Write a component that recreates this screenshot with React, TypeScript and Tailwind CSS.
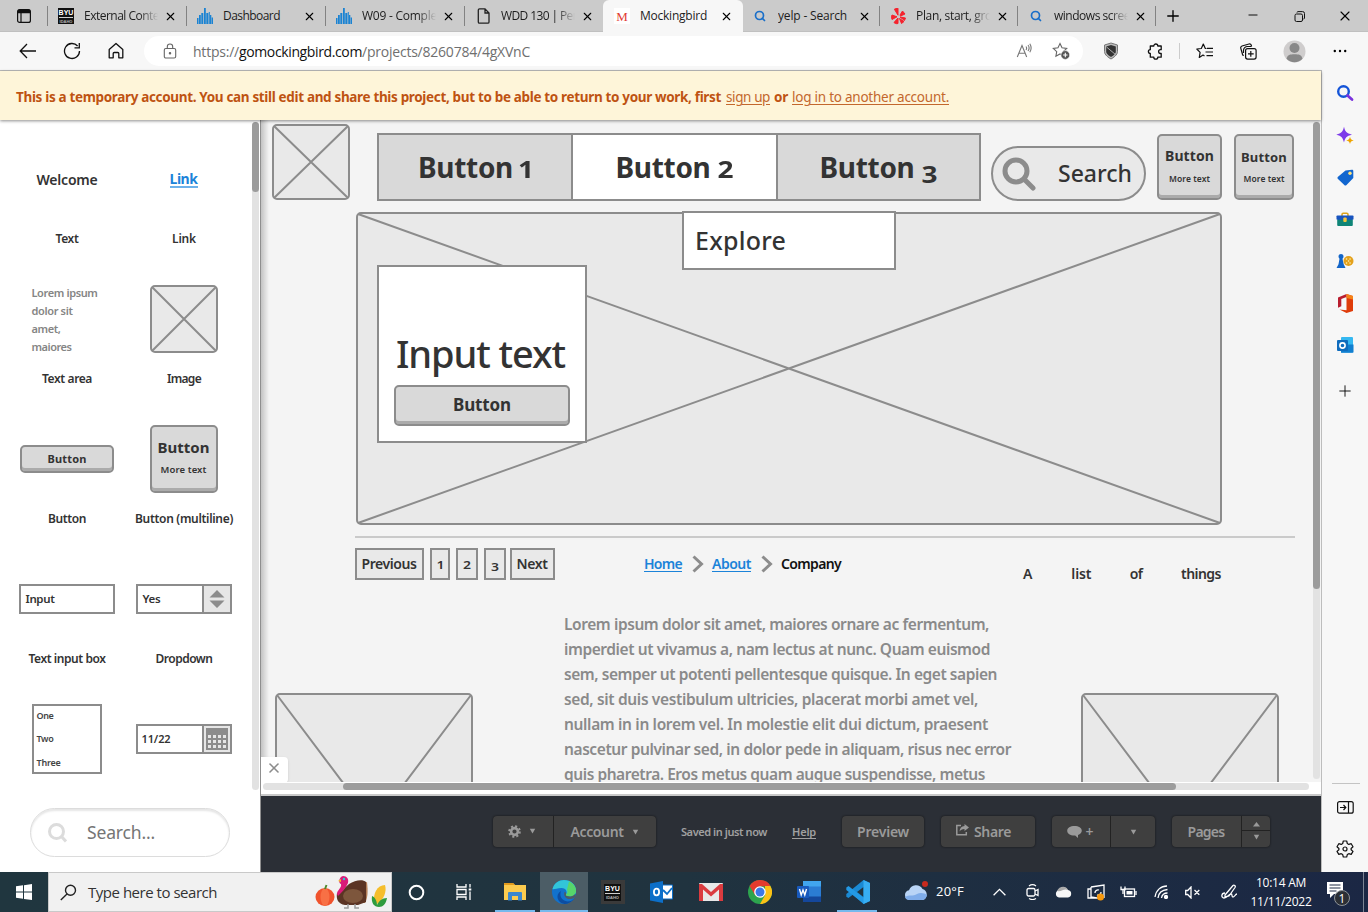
import React, { useLayoutEffect, useRef } from "react";
import { ArrowLeft, Plus, X, Minus, Search } from "lucide-react";

/* Single-line text that is tracked so that it fills a given width. */
function Fit({ w, className = "", children }: { w: number; className?: string; children: string }) {
  const ref = useRef<HTMLSpanElement>(null);
  useLayoutEffect(() => {
    const el = ref.current;
    if (!el) return;
    el.style.letterSpacing = "0px";
    const natural = el.getBoundingClientRect().width;
    el.style.letterSpacing = `${(w - natural) / children.length}px`;
  }, [w, children]);
  return (
    <span ref={ref} className={`inline-block shrink-0 whitespace-pre ${className}`}>
      {children}
    </span>
  );
}

const UI = "font-['Open_Sans','Noto_Sans',sans-serif]";

function Placeholder({ className = "", w, h }: { className?: string; w: number; h: number }) {
  return (
    <svg className={`block shrink-0 ${className}`} width={w} height={h} viewBox={`0 0 ${w} ${h}`} fill="none" stroke="#8c8c8c" strokeWidth="2">
      <rect x="1" y="1" width={w - 2} height={h - 2} rx="4" fill="#e9e9e9" />
      <path d={`M2 2L${w - 2} ${h - 2}M${w - 2} 2L2 ${h - 2}`} />
    </svg>
  );
}

/* ---------- browser chrome ---------- */

function BarsIcon() {
  return (
    <svg width="16" height="16" viewBox="0 0 16 16" fill="#1b83d2">
      <path d="M0 10h1.500v6H0zM2 7h1.800v9H2zM4.300 5h2v11h-2zM7 0h1.800v16H7zM9.300 5h2v11h-2zM11.800 4h1v12h-1zM13 7h1.300v9H13zM14.700 9.500H16V16h-1.300z" />
    </svg>
  );
}
function YelpIcon() {
  return (
    <svg width="15" height="17" viewBox="0 0 15 17" fill="#f5222d">
      <path d="M3.500 1L7 .2v7L3.500 1.500zM9 7l2.500-4L14 6 9.500 8zM1 7l5 1.800L1 11.500C.3 10 .4 8.500 1 7zM7 10v5.500C5.500 16 4 15.500 3 14.500zM8.500 10.500l4.500 3-2.500 2zM9 9l5.500 1-1 2.500z" stroke="#f5222d" />
    </svg>
  );
}
function Byu({ big = false }: { big?: boolean }) {
  return (
    <span className={`flex flex-col items-center justify-center bg-[#111] font-['Liberation_Sans',sans-serif] font-bold leading-none text-white ${big ? "size-[17px]" : "h-4 w-4"}`}>
      <span className="border-b border-white/80 text-[7px] leading-[8px]">BYU</span>
      <span className="mt-px text-[4px] leading-[5px] text-white/70">IDAHO</span>
    </span>
  );
}

type TabT = { icon: React.ReactNode; title: string; w: number; wide: number; active?: boolean; sep?: boolean; fade?: boolean };
const blueSearch = <Search size={12} strokeWidth={3.4} color="#1a6fc9" />;
const tabs: TabT[] = [
  { icon: <Byu />, title: "External Conte", w: 75, wide: 139, sep: true, fade: true },
  { icon: <BarsIcon />, title: "Dashboard", w: 57, wide: 139, sep: true },
  { icon: <BarsIcon />, title: "W09 - Comple", w: 75, wide: 139, sep: true, fade: true },
  {
    icon: (
      <svg width="13" height="16" viewBox="0 0 13 16" fill="none" stroke="#222" strokeWidth="1.300">
        <path d="M2.500.8h5.500l4 4.200v9a1.200 1.200 0 01-1.200 1.200H2.500A1.200 1.200 0 011.300 14V2A1.200 1.200 0 012.500.8zM8 1v4h4" />
      </svg>
    ),
    title: "WDD 130 | Per",
    w: 76,
    wide: 138,
    fade: true,
  },
  {
    icon: <span className="flex size-4 items-center justify-center bg-white font-['Liberation_Serif',serif] text-[13px] leading-none text-[#e23b33]">M</span>,
    title: "Mockingbird",
    w: 67,
    wide: 140,
    active: true,
  },
  { icon: blueSearch, title: "yelp - Search", w: 69, wide: 137, sep: true },
  { icon: <YelpIcon />, title: "Plan, start, gro", w: 76, wide: 138, sep: true, fade: true },
  { icon: blueSearch, title: "windows scree", w: 76, wide: 138, sep: true, fade: true },
];

function Tab({ t }: { t: TabT }) {
  const { wide } = t;
  return (
    <div
      className={`relative flex h-8 shrink-0 items-center ${wide === 139 ? "w-[139px] pl-[10px]" : wide === 140 ? "w-[140px] pl-[11px]" : wide === 137 ? "w-[137px] pl-[9px]" : "w-[138px] pl-[10px]"} ${t.active ? "rounded-t-md bg-[#f7f7f7]" : ""}`}
    >
      <span className="flex w-4 items-center justify-center">{t.icon}</span>
      <span
        className={`ml-[10px] flex w-[74px] items-center overflow-hidden text-[12px] text-[#1d1d1d] ${t.fade ? "[mask-image:linear-gradient(to_right,black_75%,transparent)]" : ""}`}
      >
        <Fit w={t.w}>{t.title}</Fit>
      </span>
      <X size={13} strokeWidth={2} className="ml-[6px] text-black" />
      {t.sep && <i className="absolute top-[6px] right-0 h-5 w-px bg-[#828282]" />}
    </div>
  );
}

function TabStrip() {
  return (
    <div className="flex h-8 items-center bg-[#cbcbcb] shadow-[inset_0_-1px_0_#c0c0c0]">
      <div className="relative flex h-8 w-[48px] shrink-0 items-center pl-4">
        <svg width="16" height="16" viewBox="0 0 16 16" fill="none" stroke="#111" strokeWidth="1.200">
          <rect x="1.600" y="1.600" width="12.800" height="12.800" rx="2" />
          <path d="M2 3.500h12" strokeWidth="3.500" />
          <path d="M5 4v10" />
        </svg>
        <i className="absolute top-[6px] right-0 h-5 w-px bg-[#828282]" />
      </div>
      {tabs.map((t) => (
        <Tab key={t.title} t={t} />
      ))}
      <Plus size={18} strokeWidth={1.8} className="ml-[8px]" />
      <div className="ml-auto flex">
        <span className="flex w-[46px] justify-center"><Minus size={14} strokeWidth={1.6} /></span>
        <span className="flex w-[46px] items-center justify-center">
          <svg width="11" height="11" viewBox="0 0 11 11" fill="none" stroke="#111">
            <rect x="1" y="3" width="7.500" height="7.500" rx="1.500" />
            <path d="M3 1.500C3 .9 3.500.6 4 .6h4.500A1.900 1.900 0 0110.500 2.500V7c0 .6-.4 1-1 1" />
          </svg>
        </span>
        <span className="flex w-[46px] justify-center"><X size={16} strokeWidth={1.7} /></span>
      </div>
    </div>
  );
}

const starPath = "M8 1.500l2 4.300 4.700.6-3.400 3.200.8 4.700L8 12l-4.100 2.300.8-4.700L1.300 6.400 6 5.800z";

function Toolbar() {
  return (
    <div className="flex h-[38px] items-center bg-[#f7f7f7] text-[#111]">
      <div className="flex w-[144px] items-center pl-[6px]">
        <span className="flex w-11 justify-center">
          <svg width="18" height="16" viewBox="0 0 18 16" fill="none" stroke="#111" strokeWidth="1.300">
            <path d="M17 8H1.500M8 1L1.200 8 8 15" />
          </svg>
        </span>
        <span className="flex w-11 justify-center">
          <svg width="18" height="18" viewBox="0 0 18 18" fill="none" stroke="#111" strokeWidth="1.300">
            <path d="M16.500 9A7.500 7.500 0 1114.600 4M16.300 1v4.800h-4.800" />
          </svg>
        </span>
        <span className="flex w-11 justify-center">
          <svg width="16" height="18" viewBox="0 0 16 18" fill="none" stroke="#111" strokeWidth="1.300">
            <path d="M1.200 7.500L8 1.500l6.800 6v8.300h-4V11.500a1 1 0 00-1-1H6.200a1 1 0 00-1 1v4.300h-4z" strokeLinejoin="round" />
          </svg>
        </span>
      </div>
      <div className="flex h-[30px] w-[939px] items-center rounded-full bg-white pl-[18px]">
        <svg width="16" height="17" viewBox="0 0 16 17" fill="none" stroke="#666" strokeWidth="1.100">
          <rect x="2.300" y="5.500" width="11.400" height="9.500" rx="1.500" />
          <path d="M5.300 5.500V3.700a2.700 2.700 0 015.400 0v1.800" />
          <circle cx="8" cy="10.200" r=".7" fill="#555" />
        </svg>
        <span className="ml-[15px] flex text-[14px] text-[#6f6f6f]">
          <Fit w={46}>https://</Fit>
          <Fit w={123} className="text-[#111]">gomockingbird.com</Fit>
          <Fit w={168}>/projects/8260784/4gXVnC</Fit>
        </span>
        <svg className="ml-auto" width="17" height="16" viewBox="0 0 17 16" fill="none" stroke="#777" strokeWidth="1.100">
          <path d="M1.300 14L6 2.500 10.700 14M2.800 10.200h6.400M10 3.500a3 3 0 010 3.500M12 2a5 5 0 010 6M13.800.8a8 8 0 010 8.500" />
        </svg>
        <svg className="mr-[13px] ml-[19px]" width="18" height="18" viewBox="0 0 18 18" fill="none" stroke="#666" strokeWidth="1.100">
          <path d={starPath} />
          <circle cx="13.300" cy="13" r="4.400" fill="#555" stroke="#fff" strokeWidth=".6" />
          <path d="M13.300 10.800v4.400M11.100 13h4.400" stroke="#fff" />
        </svg>
      </div>
      <div className="flex items-center pl-[6px]">
        <span className="flex w-11 justify-center">
          <svg width="16" height="18" viewBox="0 0 16 18">
            <path d="M8 1l6.500 2v6.500c0 3.500-4 6-6.500 7.500C5.500 15.500 1.500 13 1.500 9.500V3z" fill="#bbb" stroke="#777" />
            <path d="M8 3l4.800 1.500v5c0 2.500-3 4.500-4.800 5.500-1.800-1-4.800-3-4.800-5.500v-5z" fill="#333" />
            <path d="M3.500 5l9 7.500" stroke="#aaa" />
          </svg>
        </span>
        <span className="flex w-11 justify-center">
          <svg width="16" height="17" viewBox="0 0 16 17" fill="none" stroke="#111" strokeWidth="1.300" strokeLinejoin="round">
            <path d="M3.300 3h3.500a2 2 0 014 0h3.400v3.700h-.7a1.900 1.900 0 000 3.800h.7v3.700h-3.400a2 2 0 01-4 0H3.300v-3.700a1.900 1.900 0 010-3.800z" />
          </svg>
        </span>
        <i className="ml-[2px] h-4 w-px bg-[#ccc]" />
        <span className="ml-[2px] flex w-11 justify-center">
          <svg width="17" height="16" viewBox="0 0 17 16" fill="none" stroke="#111" strokeWidth="1.200">
            <path d="M10.500 5.500L9.300 5.500 7.300 1 5.300 5.500.8 6l3.300 3.300-.8 5.200 3.700-2.400 1.500.9M11 5.300h6M9.500 9h7.500M10.500 12.700H17" strokeLinejoin="round" />
          </svg>
        </span>
        <span className="flex w-11 justify-center">
          <svg width="17" height="17" viewBox="0 0 17 17" fill="none" stroke="#111" strokeWidth="1.200">
            <rect x="5.600" y="5.600" width="10.500" height="10.500" rx="2" />
            <path d="M10.800 8v5.700M8 10.800h5.700M3.800 12.500L2.700 12 .8 5.400A2 2 0 012 3l7-2a2 2 0 012.300 1.300l.3 1.200M3.500 10V7.500a4 4 0 014-4h4" />
          </svg>
        </span>
        <span className="flex w-[48px] justify-center">
          <svg width="23" height="23" viewBox="0 0 23 23">
            <circle cx="11.500" cy="11.500" r="11" fill="#cfcdcd" />
            <circle cx="11.500" cy="8" r="5" fill="#888" />
            <path d="M3.500 18.800c1-4 3.500-4.500 8-4.500s7 .5 8 4.500a11 11 0 01-16 0z" fill="#888" />
          </svg>
        </span>
        <span className="flex w-11 justify-center">
          <svg width="14" height="4" viewBox="0 0 14 4">
            <circle cx="1.800" cy="2" r="1.200" /><circle cx="7" cy="2" r="1.200" /><circle cx="12.200" cy="2" r="1.200" />
          </svg>
        </span>
      </div>
    </div>
  );
}

function Sidebar() {
  const cell = "flex h-[42px] items-center justify-center";
  return (
    <div className="flex w-[47px] shrink-0 flex-col border-l border-[#bdbdbd] bg-[#f7f7f7] pt-[2px]">
      <div className={cell}>
        <svg width="18" height="18" viewBox="0 0 18 18" fill="none">
          <circle cx="7.500" cy="7.500" r="5.300" stroke="#1454d8" strokeWidth="2.400" />
          <path d="M11.500 11.500l4.500 4" stroke="#7a32dd" strokeWidth="2.800" strokeLinecap="round" />
        </svg>
      </div>
      <div className={cell}>
        <svg width="18" height="18" viewBox="0 0 18 18">
          <path d="M8 .8c1.300 5 2.300 6.500 8 7.900-5.700 1.300-6.700 2.800-8 7.800C6.700 11.500 5.700 10 .3 8.700 5.700 7.300 6.700 5.800 8 .8z" fill="#7d3bea" />
          <path d="M14 10.800c.6 2.500 1.200 3 3.800 3.700-2.600.6-3.200 1-3.800 3.500-.6-2.500-1.200-2.900-3.800-3.500 2.600-.7 3.200-1.200 3.800-3.700z" fill="#efa500" />
        </svg>
      </div>
      <div className={cell}>
        <svg width="17" height="17" viewBox="0 0 17 17">
          <path d="M8.500 1.500L15 .8c.8 0 1.300.5 1.300 1.300v7L9.500 16c-.7.7-1.500.7-2.200 0L1 10c-.7-.7-.7-1.600 0-2.300z" fill="#1266cf" />
          <circle cx="13" cy="4.200" r="1.700" fill="#ffe27a" />
        </svg>
      </div>
      <div className={cell}>
        <svg width="18" height="15" viewBox="0 0 18 15">
          <path d="M6 4V2.500A1.200 1.200 0 017.200 1.300h3.600A1.200 1.200 0 0112 2.500V4" fill="none" stroke="#dca21c" strokeWidth="1.500" />
          <rect x="1.200" y="7" width="15.600" height="7" rx="1" fill="#0f8577" />
          <rect x=".5" y="3.500" width="17" height="4.200" rx=".8" fill="#1753bf" />
          <rect x="7.300" y="5.500" width="3.400" height="4.500" rx="1" fill="#f4c33c" />
        </svg>
      </div>
      <div className={cell}>
        <svg width="18" height="16" viewBox="0 0 18 16">
          <circle cx="12.500" cy="8" r="5" fill="#e4a11b" />
          <path d="M10.500 6h.1M14 6h.1M12.500 8h.1M10.500 10h.1M14 10h.1" stroke="#fff3b5" strokeWidth="1.500" strokeLinecap="round" />
          <path d="M2.500 3.500a2.500 2.500 0 115 0c0 1-.4 1.600-1 2.200l1.200 5.500L9.500 15H.5l2-3.800L3.500 5.700c-.6-.6-1-1.200-1-2.200z" fill="#1365c8" />
        </svg>
      </div>
      <div className={cell}>
        <svg width="17" height="19" viewBox="0 0 17 19">
          <path d="M9.500 0L1 3.500v10.200l3.300-1.500V5l5.200-2z" fill="#b91d2f" />
          <path d="M9.500 0l6.500 2v15L9.500 19l-7-3.500 7 .7z" fill="#df3c0a" />
          <path d="M9.500 0l6.500 2v3.500L9.500 4z" fill="#f58318" />
        </svg>
      </div>
      <div className={cell}>
        <svg width="17" height="16" viewBox="0 0 17 16">
          <rect x="4" y="0" width="12" height="15.500" rx="1" fill="#35b8f1" />
          <path d="M4 7.500h12.500V15a.8.8 0 01-.8.8H4z" fill="#117fd0" />
          <rect x="0" y="3" width="11" height="11" rx="1" fill="#0f6cbd" />
          <circle cx="5.500" cy="8.500" r="2.600" fill="none" stroke="#fff" strokeWidth="1.600" />
        </svg>
      </div>
      <div className="mt-[4px] flex h-[42px] items-center justify-center">
        <Plus size={18} strokeWidth={1.2} />
      </div>
      <i className="mt-auto ml-[10px] h-px w-7 bg-[#c4c4c4]" />
      <div className="mt-[2px] flex h-[42px] items-center justify-center">
        <svg width="17" height="13" viewBox="0 0 17 13" fill="none" stroke="#111" strokeWidth="1.200">
          <rect x=".6" y=".6" width="15.600" height="11.600" rx="2" />
          <path d="M11.500 1v11M3 6.500h5.500M6.500 4l2.300 2.500L6.500 9" />
        </svg>
      </div>
      <div className="mb-[2px] flex h-[42px] items-center justify-center">
        <svg width="18" height="18" viewBox="0 0 18 18" fill="none" stroke="#111" strokeWidth="1.200" strokeLinejoin="round">
          <path d="M7.300 1h3.400l.6 2.500 1.500.9L15.200 3.700l1.800 3-1.900 1.800v1.200l1.900 1.700-1.800 3-2.400-.7-1.500.9-.6 2.400H7.300l-.6-2.400-1.500-.9-2.400.7-1.800-3 1.900-1.700V8.500L1 6.700l1.800-3 2.400.7 1.500-.9z" />
          <circle cx="9" cy="9" r="2" />
        </svg>
      </div>
    </div>
  );
}

/* ---------- component palette ---------- */

function PaletteCell({ label, w = 0, children }: { label?: string; w?: number; children: React.ReactNode }) {
  return (
    <div className="flex h-[140px] w-[117px] flex-col items-center">
      <div className="flex h-[100px] items-center justify-center">{children}</div>
      {label && (
        <div className="flex h-5 items-center pl-px text-[12px] font-[560] text-[#333]">
          <Fit w={w}>{label}</Fit>
        </div>
      )}
    </div>
  );
}

const keyed = "rounded-[5px] border-2 border-[#8c8c8c] bg-[#d9d9d9] shadow-[inset_0_-3px_0_#ababab]";

function Palette() {
  return (
    <div className="relative flex w-[261px] shrink-0 flex-col border-r border-[#8f8f8f] bg-white">
      <div className="flex h-[670px] shrink-0 overflow-hidden">
        <div className="flex w-[252px] flex-wrap content-start pt-[9px] pl-[8px]">
          <PaletteCell label="Text" w={23}>
            <Fit w={61} className="ml-px text-[14px] font-semibold text-[#333]">Welcome</Fit>
          </PaletteCell>
          <PaletteCell label="Link" w={24}>
            <span className="mt-[2px] border-b-2 border-[#6cb1ea] text-[14px] leading-[14px] font-bold text-[#1b83d9]">
              <Fit w={28}>Link</Fit>
            </span>
          </PaletteCell>
          <PaletteCell label="Text area" w={50}>
            <div className="mt-[2px] flex w-[70px] flex-col text-[11px] leading-[18px] font-[560] text-[#858585]">
              <Fit w={66} className="self-start">Lorem ipsum</Fit>
              <Fit w={41} className="self-start">dolor sit</Fit>
              <Fit w={29} className="self-start">amet,</Fit>
              <Fit w={40} className="self-start">maiores</Fit>
            </div>
          </PaletteCell>
          <PaletteCell label="Image" w={34}>
            <Placeholder w={68} h={68} />
          </PaletteCell>
          <PaletteCell label="Button" w={38}>
            <div className={`flex h-7 w-[94px] items-center justify-center pl-px text-[11px] font-bold text-[#333] ${keyed}`}>
              <Fit w={39}>Button</Fit>
            </div>
          </PaletteCell>
          <PaletteCell label="Button (multiline)" w={98}>
            <div className={`flex h-[68px] w-[68px] flex-col items-center pt-[9px] text-[#333] ${keyed}`}>
              <Fit w={52} className="text-[15px] leading-[23px] font-bold">Button</Fit>
              <Fit w={46} className="text-[9.500px] leading-[22px] font-semibold">More text</Fit>
            </div>
          </PaletteCell>
          <PaletteCell label="Text input box" w={77}>
            <div className="flex h-[30px] w-24 items-center border-2 border-[#8c8c8c] bg-white pl-[5px] text-[11.500px] font-[560] text-[#333]">
              <Fit w={29}>Input</Fit>
            </div>
          </PaletteCell>
          <PaletteCell label="Dropdown" w={57}>
            <div className="flex h-[30px] w-24 items-center border-2 border-[#8c8c8c] bg-white pl-[5px] text-[11.500px] font-[560] text-[#333]">
              <Fit w={18}>Yes</Fit>
              <span className="ml-auto flex h-full w-[28px] items-center justify-center border-l-2 border-[#8c8c8c] bg-[#e6e6e6]">
                <svg width="16" height="18" viewBox="0 0 16 18" fill="#8c8c8c"><path d="M8 0l7.500 7.500H.5zM8 18L.5 10.500h15z" /></svg>
              </span>
            </div>
          </PaletteCell>
          <PaletteCell>
            <div className="flex h-[70px] w-[70px] flex-col justify-between border-2 border-[#8c8c8c] bg-white pt-[2px] pb-[2px] pl-[3px] text-[9px] leading-[15px] font-[560] text-[#444]">
              <Fit w={17} className="self-start">One</Fit>
              <Fit w={17} className="-mt-px self-start">Two</Fit>
              <Fit w={24} className="self-start">Three</Fit>
            </div>
          </PaletteCell>
          <PaletteCell>
            <div className="flex h-[30px] w-24 items-center border-2 border-[#8c8c8c] bg-white pl-1 text-[11px] font-[560] text-[#333]">
              <Fit w={29}>11/22</Fit>
              <span className="ml-auto flex h-full w-[28px] items-center justify-center border-l-2 border-[#8c8c8c] bg-[#e6e6e6]">
                <svg width="22" height="22" viewBox="0 0 22 22" fill="#8c8c8c">
                  <path d="M0 0h22v22H0z" />
                  <path d="M2 7h3v3H2zM7 7h3v3H7zM12 7h3v3h-3zM17 7h3v3h-3zM2 12h3v3H2zM7 12h3v3H7zM12 12h3v3h-3zM17 12h3v3h-3zM2 17h3v3H2zM7 17h3v3H7zM12 17h3v3h-3zM17 17h3v3h-3z" fill="#e6e6e6" />
                </svg>
              </span>
            </div>
          </PaletteCell>
        </div>
        <div className="mt-[2px] h-[668px] w-[7px] rounded-full bg-[#e2e2e2]">
          <div className="h-[70px] rounded-full bg-[#9c9c9c]" />
        </div>
      </div>
      <div className="mt-[18px] ml-[30px] flex h-[49px] w-[200px] items-center rounded-full border border-[#dcdcdc] pl-[16px] shadow-[inset_0_2px_2px_#e6e6e6]">
        <svg width="20" height="20" viewBox="0 0 20 20" fill="none" stroke="#dcdcdc" strokeWidth="3">
          <circle cx="9.500" cy="8.500" r="7" /><path d="M14 13l5 5.500" />
        </svg>
        <Fit w={68} className="ml-[20px] text-[17.500px] text-[#757575]">Search...</Fit>
      </div>
    </div>
  );
}

/* ---------- canvas ---------- */

const lorem: [string, number][] = [
  ["Lorem ipsum dolor sit amet, maiores ornare ac fermentum,", 425],
  ["imperdiet ut vivamus a, nam lectus at nunc. Quam euismod", 426],
  ["sem, semper ut potenti pellentesque quisque. In eget sapien", 433],
  ["sed, sit duis vestibulum ultricies, placerat morbi amet vel,", 414],
  ["nullam in in lorem vel. In molestie elit dui dictum, praesent", 424],
  ["nascetur pulvinar sed, in dolor pede in aliquam, risus nec error", 447],
  ["quis pharetra. Eros metus quam augue suspendisse, metus", 421],
];

function Segment({ n, className }: { n: string; className: string }) {
  return (
    <div className={`flex items-center justify-center gap-[7px] pb-px text-[28px] font-bold text-[#333] ${className}`}>
      <Fit w={95}>Button</Fit>
      <span className={`inline-block origin-[50%_78%] scale-y-[0.82] ${n === "3" ? "translate-y-[5px]" : ""} ${n === "1" ? "-mr-[2px] -ml-[2px]" : ""}`}>{n}</span>
    </div>
  );
}

function Chevron() {
  return (
    <svg width="12" height="18" viewBox="0 0 12 18" fill="none" stroke="#8c8c8c" strokeWidth="3">
      <path d="M1.500 1.500L9.500 9l-8 7.500" />
    </svg>
  );
}

function PageBox({ label, w, className }: { label: string; w: number; className: string }) {
  const digit = label.length === 1;
  return (
    <div className={`flex h-8 items-center justify-center border-2 border-[#8c8c8c] bg-[#e9e9e9] font-[560] text-[#333] ${className}`}>
      <span className={digit ? `inline-block origin-[50%_78%] scale-y-[0.82] text-[14px] ${label === "3" ? "translate-y-[1px]" : "-translate-y-px"}` : "-translate-y-px pr-px text-[14px]"}>
        <Fit w={w}>{label}</Fit>
      </span>
    </div>
  );
}

function Canvas() {
  return (
    <div className="relative h-[662px] w-[1060px] shrink-0 overflow-hidden bg-[#f4f4f4] text-[#333]">
      <Placeholder w={78} h={76} className="absolute top-[4px] left-[11px]" />

      <div className="absolute top-[13px] left-[116px] flex h-[68px] w-[604px] border-2 border-[#8c8c8c] bg-[#d9d9d9]">
        <Segment n="1" className="w-[192px]" />
        <Segment n="2" className="w-[207px] border-x-2 border-[#8c8c8c] bg-white" />
        <Segment n="3" className="flex-1" />
      </div>

      <div className="absolute top-[26px] left-[730px] flex h-[55px] w-[155px] items-center rounded-full border-2 border-[#8c8c8c] bg-[#e9e9e9] pl-[9px]">
        <svg width="34" height="34" viewBox="0 0 34 34" fill="none" stroke="#8c8c8c" strokeWidth="5">
          <circle cx="14" cy="14" r="11" /><path d="M22 22l9 9" strokeLinecap="round" />
        </svg>
        <Fit w={74} className="ml-[22px] text-[23px] font-medium">Search</Fit>
      </div>

      <div className={`absolute top-[14px] left-[896px] flex h-[66px] w-[65px] flex-col items-center pt-[8px] ${keyed}`}>
        <Fit w={49} className="text-[14px] leading-[24px] font-bold">Button</Fit>
        <Fit w={41} className="text-[8.500px] leading-[21px] font-semibold">More text</Fit>
      </div>
      <div className={`absolute top-[14px] left-[973px] flex h-[66px] w-[60px] flex-col items-center pt-[10px] ${keyed}`}>
        <Fit w={46} className="text-[13px] leading-[22px] font-bold">Button</Fit>
        <Fit w={41} className="text-[8.500px] leading-[21px] font-semibold">More text</Fit>
      </div>

      <Placeholder w={866} h={313} className="absolute top-[92px] left-[95px]" />

      <div className="absolute top-[91px] left-[421px] flex h-[59px] w-[214px] items-center border-2 border-[#8c8c8c] bg-white pl-[11px] text-[25px] font-medium">
        <Fit w={91}>Explore</Fit>
      </div>
      <div className="absolute top-[145px] left-[116px] flex h-[178px] w-[210px] items-center border-2 border-[#8c8c8c] bg-white pb-px pl-[17px] text-[38px] font-medium">
        <Fit w={169}>Input text</Fit>
      </div>
      <div className={`absolute top-[265px] left-[133px] flex h-[41px] w-[176px] items-center justify-center pb-px text-[17px] font-bold ${keyed}`}>
        <Fit w={58}>Button</Fit>
      </div>

      <div className="absolute top-[416px] left-[94px] h-[2px] w-[940px] bg-[#cacaca]" />

      <div className="absolute top-[428px] left-[94px] flex">
        <PageBox label="Previous" w={55} className="w-[69px]" />
        <PageBox label="1" w={7} className="ml-[6px] w-5" />
        <PageBox label="2" w={8} className="ml-[6px] w-[22px]" />
        <PageBox label="3" w={8} className="ml-[6px] w-[22px]" />
        <PageBox label="Next" w={31} className="ml-[4px] w-[45px]" />
      </div>

      <div className="absolute top-[434px] left-[383px] flex h-5 items-center text-[14px] font-[560]">
        <span className="border-b border-[#1b83d9] leading-[15px] text-[#1b83d9]"><Fit w={38}>Home</Fit></span>
        <span className="mr-[8px] ml-[10px]"><Chevron /></span>
        <span className="border-b border-[#1b83d9] leading-[15px] text-[#1b83d9]"><Fit w={39}>About</Fit></span>
        <span className="mr-[8px] ml-[10px]"><Chevron /></span>
        <Fit w={60} className="-translate-y-px text-[#111]">Company</Fit>
      </div>

      <div className="absolute top-[443px] left-[762px] flex h-5 w-[198px] items-center justify-between text-[14px] font-[560]">
        <Fit w={10}>A</Fit>
        <Fit w={20}>list</Fit>
        <Fit w={13}>of</Fit>
        <Fit w={40}>things</Fit>
      </div>

      <div className="absolute top-[492px] left-[303px] flex flex-col items-start text-[15.500px] leading-[25px] font-[560] text-[#8a8a8a]">
        {lorem.map(([line, w]) => (
          <Fit key={line} w={w}>{line}</Fit>
        ))}
      </div>

      <Placeholder w={198} h={262} className="absolute top-[573px] left-[14px]" />
      <Placeholder w={198} h={262} className="absolute top-[573px] left-[820px]" />

      <div className="absolute top-0 left-0 h-full w-2 bg-linear-to-r from-black/20 to-transparent" />
      <div className="absolute top-[637px] left-0 flex h-[26px] w-[27px] items-center justify-center rounded-r bg-white pr-px pb-[4px] shadow-sm">
        <X size={16} strokeWidth={2.4} color="#8c8c8c" />
      </div>
      <div className="absolute top-[2px] right-[1px] h-[657px] w-[7px] rounded-full bg-[#e2e2e2]">
        <div className="h-[467px] rounded-full bg-[#9c9c9c]" />
      </div>
    </div>
  );
}

const dark = "flex h-[31px] items-center justify-center rounded bg-[#3f3f3f] text-[14px] font-[560] text-[#9a9a9a] shadow-[0_0_2px_#111]";

function Caret({ up = false }: { up?: boolean }) {
  return (
    <svg width="7" height="6" viewBox="0 0 7 6" fill="#9a9a9a"><path d={up ? "M3.500 1L7 5.500H0z" : "M3.500 5.500L.8.8h5.400z"} /></svg>
  );
}

function BottomBar() {
  return (
    <div className="flex h-[76px] items-start bg-[#2b2f36] pt-5 pl-[232px]">
      <div className={`${dark} w-[163px]`}>
        <span className="flex h-full w-[61px] items-center justify-center gap-[8px] border-r border-[#222] pr-[3px] pb-px">
          <svg width="13" height="13" viewBox="0 0 13 13" fill="none" stroke="#9a9a9a">
            <circle cx="6.500" cy="6.500" r="3.400" strokeWidth="2.600" />
            <circle cx="6.500" cy="6.500" r="5.300" strokeWidth="2" strokeDasharray="2.080 2.080" />
          </svg>
          <Caret />
        </span>
        <span className="flex flex-1 items-center justify-center gap-[8px] pr-px"><Fit w={53}>Account</Fit><Caret /></span>
      </div>
      <div className="ml-[25px] flex h-[33px] items-center text-[11px] font-[560] text-[#a0a0a0]">
        <Fit w={86}>Saved in just now</Fit>
        <Fit w={24} className="ml-[25px] underline underline-offset-2">Help</Fit>
      </div>
      <div className={`${dark} ml-[26px] w-[82px]`}><Fit w={52}>Preview</Fit></div>
      <div className={`${dark} ml-[17px] w-[94px] gap-[5px] pr-[9px]`}>
        <svg className="mb-[3px]" width="13" height="12" viewBox="0 0 13 12" fill="none" stroke="#9a9a9a" strokeWidth="1.500">
          <path d="M5 1.500H.8v9.200h9.500V8" /><path d="M8.500 0L13 3.500 8.500 7V5C6 5 4.500 6 3.500 7.500 3.800 4 5.500 2.200 8.500 2z" fill="#9a9a9a" stroke="none" />
        </svg>
        <Fit w={37}>Share</Fit>
      </div>
      <div className={`${dark} ml-[17px] w-[103px]`}>
        <span className="flex h-full w-[59px] items-center justify-center gap-1 border-r border-[#222] pr-[2px]">
          <svg width="15" height="12" viewBox="0 0 15 12" fill="#9a9a9a"><path d="M7.500 0C3.400 0 .2 2 .2 4.800s3 4.800 7 4.800l1 0L11 12v-3c2.300-.8 3.800-2.300 3.800-4.200C14.800 2 11.600 0 7.500 0z" /></svg>
          <Fit w={8}>+</Fit>
        </span>
        <span className="flex flex-1 justify-center"><Caret /></span>
      </div>
      <div className={`${dark} ml-[17px] w-[98px]`}>
        <span className="flex h-full flex-1 items-center justify-center border-r border-[#222] pr-px"><Fit w={37}>Pages</Fit></span>
        <span className="flex h-full w-7 flex-col">
          <span className="flex flex-1 items-center justify-center border-b border-[#222] pt-[2px]"><Caret up /></span>
          <span className="flex flex-1 items-center justify-center pb-1"><Caret /></span>
        </span>
      </div>
    </div>
  );
}

/* ---------- taskbar ---------- */

function Feast() {
  return (
    <svg width="72" height="34" viewBox="0 0 72 34">
      <ellipse cx="10" cy="22" rx="9.500" ry="9" fill="#f0532d" />
      <ellipse cx="10" cy="22" rx="4.500" ry="9" fill="#f87045" />
      <path d="M10 14l1.500-4" stroke="#4d8a2c" strokeWidth="2" />
      <path d="M52 7c1 8 1 16-2 21H38V12z" fill="#b57f58" />
      <path d="M22 18c3 1 6-4 12-9 6-4 14-5 17-2v20l-8 3H30c-7-1-9-6-8-12z" fill="#5b3424" />
      <ellipse cx="38" cy="21" rx="10" ry="7" fill="#7d563c" />
      <path d="M22 19c0-4 5-6 4-10-3-1-2-7 2-8 4 0 6 3 5 7-2 5-6 9-10 13z" fill="#d91a78" />
      <path d="M26 4l-3 2 3 1z" fill="#f2bc2c" /><circle cx="29" cy="4" r="1.200" fill="#2ac5d3" />
      <path d="M33 29v4h-4M40 29v4h4" stroke="#9b9b9b" strokeWidth="1.500" fill="none" />
      <path d="M59 27c-1-8 3-17 11-17 2 6-1 15-8 19z" fill="#f5be2c" />
      <path d="M57 21c3 1 5 5 5 9 2-4 5-7 10-7-1 6-4 9-8 9-5 0-8-4-7-11z" fill="#2e9c3e" />
    </svg>
  );
}

const stroke = { fill: "none", stroke: "#fff", strokeWidth: 1.3 } as const;

function Taskbar() {
  const cell = "flex h-10 w-[49px] shrink-0 items-center justify-center";
  return (
    <div className={`flex h-10 items-center bg-linear-to-r from-[#20363f] via-[#20333f] to-[#1b2744] text-white ${UI}`}>
      <span className="flex h-10 w-12 shrink-0 items-center justify-center">
        <svg width="16" height="16" viewBox="0 0 16 16" fill="#fff"><path d="M0 2.300L7 1.300v6.300H0zM8 1.200L16 0v7.600H8zM0 8.500h7v6.300l-7-1zM8 8.500h8V16l-8-1.100z" /></svg>
      </span>
      <span className="flex h-10 w-[344px] shrink-0 items-center border border-[#c9c9c9] bg-[#f1f1f1] pl-[11px] text-[#333]">
        <svg width="17" height="17" viewBox="0 0 17 17" fill="none" stroke="#222" strokeWidth="1.400"><circle cx="10.500" cy="6.300" r="5" /><path d="M7 10L.8 16" /></svg>
        <Fit w={129} className="ml-[11px] text-[15px]">Type here to search</Fit>
        <span className="ml-[98px]"><Feast /></span>
      </span>
      <span className="flex h-10 w-12 shrink-0 items-center justify-center">
        <svg width="17" height="17" viewBox="0 0 17 17"><circle cx="8.500" cy="8.500" r="6.800" fill="none" stroke="#fff" strokeWidth="2" /></svg>
      </span>
      <span className={cell}>
        <svg width="17" height="16" viewBox="0 0 17 16" {...stroke}><path d="M1 0v3h9V0M1 16v-3h9v3M1 5.500h9v5H1zM14 0v3.500M14 7.500V16" /><path d="M12.700 4.500h2.600v2h-2.600z" fill="#fff" stroke="none" /></svg>
      </span>
      <span className="relative flex h-10 w-[51px] shrink-0 items-center justify-center">
        <svg width="22" height="18" viewBox="0 0 22 18"><path d="M0 0h9l2 2h11v15H0z" fill="#fccb4e" /><path d="M0 0h9l2 2H0z" fill="#e29a1c" /><path d="M4 17.500V10a1 1 0 011-1h12a1 1 0 011 1v7.500h-4V13H8v4.500z" fill="#3b86ce" /></svg>
        <i className="absolute bottom-0 left-[6px] h-[2px] w-10 bg-[#76b9ed]" />
      </span>
      <span className="relative flex h-10 w-12 shrink-0 items-center justify-center bg-[#4c5d66]">
        <svg width="24" height="24" viewBox="0 0 24 24">
          <circle cx="12" cy="12" r="12" fill="#1272cc" />
          <path d="M.5 9C2 3 7 0 12 0c7 0 12 5 12 10.500 0 4-3 6-6 6-3 0-4.500-1-4-2 1.500-2 .5-6.500-4.500-6.500C5 8 1 10 .5 9z" fill="#32c5d9" />
          <path d="M17 1.500c4.500 2 7 5.500 7 9 0 4-3 6-6 6s-4.500-1-4-2c1.500-1 2-3 1-5z" fill="#57d66b" />
          <path d="M9 11c-2 5 1 10 6.500 10.500 3 0 5-1 7-3.500C20 22 16 24 12.500 24 5 23 3 14 9 11z" fill="#0e4da0" />
          <path d="M14 14.500c-.5 1 1 2 4 2 2 0 4-1 5-2.500l.5 3c-6 4.500-13 1-11-5 1-.5 2 1 1.500 2.500z" fill="#4c5d66" />
        </svg>
        <i className="absolute bottom-0 left-0 h-[2px] w-12 bg-[#76b9ed]" />
      </span>
      <span className={cell}><span className="flex size-6 items-center justify-center bg-[#3a3a3a]"><Byu big /></span></span>
      <span className={cell}>
        <svg width="23" height="22" viewBox="0 0 23 22"><path d="M12 4h10.500v14H12z" fill="#fff" stroke="#0c6fc9" /><path d="M13 9l4 4 5-6" fill="none" stroke="#0c6fc9" strokeWidth="1.800" /><path d="M0 2.500L13 0v22L0 19.500z" fill="#0c6fc9" /><ellipse cx="6.500" cy="11" rx="2.600" ry="3.300" fill="none" stroke="#fff" strokeWidth="1.800" /></svg>
      </span>
      <span className={cell}>
        <svg width="24" height="18" viewBox="0 0 24 18"><rect width="24" height="18" rx="1" fill="#e8e8e8" /><path d="M0 18V1h3l9 8 9-8h3v17h-4V6.500l-8 7-8-7V18z" fill="#da3b3f" /></svg>
      </span>
      <span className={cell}>
        <svg width="24" height="24" viewBox="0 0 24 24"><circle cx="12" cy="12" r="12" fill="#2da44e" /><path d="M1.600 6A12 12 0 0122.400 6L12 6.500 7 15z" fill="#e33b2e" /><path d="M22.400 6A12 12 0 0112 24l5.200-9L17 6z" fill="#fbc116" /><circle cx="12" cy="12" r="5.800" fill="#fff" /><circle cx="12" cy="12" r="4.500" fill="#3b78e7" /></svg>
      </span>
      <span className={cell}>
        <svg width="24" height="22" viewBox="0 0 24 22"><rect x="6" width="18" height="21" rx="1" fill="#2b7cd3" /><path d="M6 0h18v5.500H6z" fill="#41a5ee" /><path d="M6 15.500h18V21H6z" fill="#14479b" /><rect y="5" width="12" height="12" rx="1" fill="#185abd" /><path d="M2.500 8l1.700 6L6 9l1.800 5 1.700-6" fill="none" stroke="#fff" strokeWidth="1.400" /></svg>
      </span>
      <span className={`${cell} relative`}>
        <svg width="24" height="24" viewBox="0 0 24 24"><path d="M17.500 0L24 3v18l-6.500 3L7 14.500 2.500 18 .3 16.800V14L17.500 0z" fill="#1a8ad4" /><path d="M.3 7.500L2.500 6 18 18v6l-17.700-14z" fill="#2399e5" /><path d="M17.500 7v10L11 12z" fill="#20333f" /><path d="M17.500 0L24 3v18l-6.500 3z" fill="#37aef3" /></svg>
        <i className="absolute bottom-0 left-[4px] h-[2px] w-10 bg-[#76b9ed]" />
      </span>

      <span className="ml-[21px] flex w-[28px] shrink-0 items-center">
        <svg width="26" height="24" viewBox="0 0 26 24"><path d="M6 20a5 5 0 010-9.800A7.500 7.500 0 0119.500 9 5.800 5.800 0 0120 20z" fill="#b8d4f6" /><path d="M2 17c4-3 8 0 12-3 3-2 8-1 10 1-1 3-2 5-5 5H6c-2 0-3.500-1-4-3z" fill="#7fadea" /><circle cx="22" cy="4" r="3" fill="#c72a1e" /></svg>
      </span>
      <Fit w={28} className="ml-[5px] text-[13px]">20°F</Fit>
      <span className="ml-[19px] flex w-[33px] shrink-0 justify-center"><svg width="13" height="8" viewBox="0 0 13 8" {...stroke}><path d="M.6 7.300L6.500 1.400l5.900 5.900" /></svg></span>
      <span className="flex w-[32px] shrink-0 justify-center"><svg width="13" height="16" viewBox="0 0 13 16" {...stroke}><rect x="1" y="4.500" width="8" height="7.500" rx="1.500" /><path d="M9 7l3-1.500v6L9 10M3 2c2-1.500 5-1.500 7 0M3 14.500c2 1.200 5 1.200 7 0" /></svg></span>
      <span className="flex w-[31px] shrink-0 justify-center"><svg width="17" height="12" viewBox="0 0 17 12"><path d="M4 11.500a3.700 3.700 0 010-7.300A5 5 0 0113 4a3.800 3.800 0 010 7.500z" fill="#f7f7f7" /><path d="M2 5C4 0 11-1 13 4 9 2 7 6 2 5z" fill="#aaa" /></svg></span>
      <span className="flex w-[33px] shrink-0 justify-center"><svg width="18" height="17" viewBox="0 0 18 17" {...stroke}><path d="M4 3l13-2v13M4 3v10l6 1M4 5H1v9h10M8 9a3 3 0 014-3M14 8a3 3 0 01-4 3" /><circle cx="13.500" cy="13" r="3.500" fill="#fa9a0c" stroke="none" /></svg></span>
      <span className="flex w-[33px] shrink-0 justify-center"><svg width="17" height="12" viewBox="0 0 17 12" {...stroke}><rect x="4.500" y="3" width="10" height="7.500" /><path d="M16 5v4M1 .5v3h4v-3M3 4v4" /><path d="M6.500 5h6v3.500h-6z" fill="#fff" stroke="none" /></svg></span>
      <span className="flex w-[32px] shrink-0 justify-center"><svg width="15" height="14" viewBox="0 0 15 14" {...stroke}><path d="M1 12C2 5 7 1 13 1M4 13c.5-5 4-8 9.500-8.500M7.500 13c.5-3 3-5 6-5" /><circle cx="12" cy="12" r="1.500" fill="#fff" /></svg></span>
      <span className="flex w-[31px] shrink-0 justify-center"><svg width="15" height="13" viewBox="0 0 15 13" {...stroke}><path d="M.7 4.500h2L6 1v11L2.700 8.500h-2zM9.500 4l4.800 4.800M14.300 4L9.500 8.800" /></svg></span>
      <span className="flex w-[42px] shrink-0 justify-center"><svg width="17" height="16" viewBox="0 0 17 16" {...stroke}><path d="M4 11L12 1.500c1-1 3 .5 2 2L8 12l-4 1zM4 9c-4 0-4 5-1 5s5-4 7-4 0 3 2 3 2-3 4-3" /></svg></span>
      <div className="-ml-[4px] flex w-[70px] shrink-0 flex-col items-center pt-px text-[12px] leading-[18.500px]">
        <Fit w={50}>10:14 AM</Fit>
        <Fit w={61}>11/11/2022</Fit>
      </div>
      <span className="ml-[10px] shrink-0">
        <svg width="26" height="28" viewBox="0 0 26 28"><path d="M1 4h16v12H8l-4 4v-4H1z" fill="#fff" /><path d="M3.500 7h11M3.500 10h11M3.500 13h7" stroke="#1c2843" /><circle cx="16" cy="20" r="7.500" fill="#2b2f35" stroke="#8d9297" /><text x="16" y="24.500" fill="#fff" fontSize="12" textAnchor="middle">1</text></svg>
      </span>
      <i className="mr-1 ml-auto h-10 w-px bg-[#7b8493]" />
    </div>
  );
}

export default function App() {
  return (
    <div className={`flex h-[912px] w-[1368px] flex-col overflow-hidden ${UI}`}>
      <TabStrip />
      <Toolbar />
      <div className="flex h-[802px]">
        <div className="flex w-[1321px] shrink-0 flex-col border-t border-[#bdbdbd] font-['Noto_Sans','Open_Sans',sans-serif]">
          <div className="relative z-10 flex h-[49px] shrink-0 items-center bg-[#fef5d9] pt-[4px] pl-[16px] text-[13.500px] text-[#be5312] shadow-[0_1px_3px_rgba(0,0,0,0.45)]">
            <Fit w={705} className="font-bold">This is a temporary account. You can still edit and share this project, but to be able to return to your work, first</Fit>
            <Fit w={44} className="ml-[5px] text-[#c3672d] underline underline-offset-2">sign up</Fit>
            <Fit w={14} className="ml-[4px] font-bold">or</Fit>
            <Fit w={157} className="ml-[4px] text-[#c3672d] underline underline-offset-2">log in to another account.</Fit>
          </div>
          <div className="flex h-[752px]">
            <Palette />
            <div className="flex w-[1060px] flex-col bg-white">
              <Canvas />
              <div className="h-[14px] border-b-2 border-[#c9c9c9] pt-px pl-[2px]">
                <div className="h-[7px] w-[1046px] rounded-full bg-[#e2e2e2] pl-[80px]">
                  <div className="h-full w-[833px] rounded-full bg-[#9c9c9c]" />
                </div>
              </div>
              <BottomBar />
            </div>
          </div>
        </div>
        <Sidebar />
      </div>
      <Taskbar />
    </div>
  );
}
